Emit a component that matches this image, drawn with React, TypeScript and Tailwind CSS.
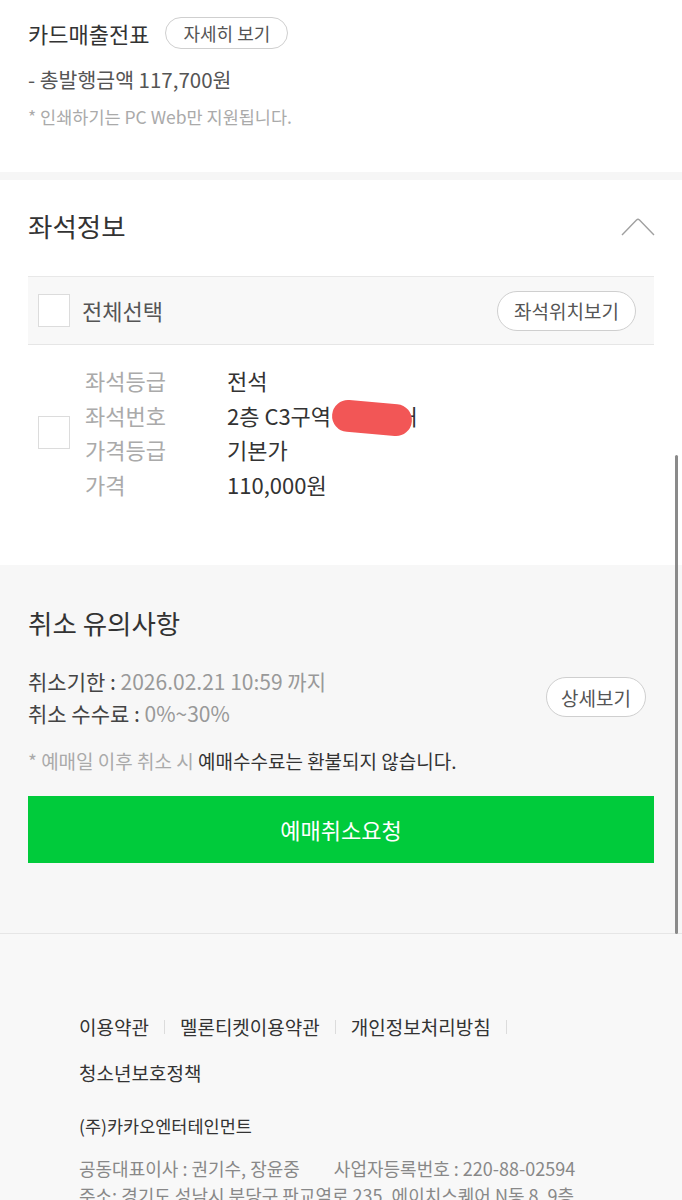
import React from "react";

const font = "font-['Noto_Sans_CJK_KR','Noto_Sans',sans-serif]";

const seatRows = [
  { label: "좌석등급", value: "전석" },
  { label: "좌석번호", value: "2층 C3구역", hidden: true },
  { label: "가격등급", value: "기본가" },
  { label: "가격", value: "110,000원" },
];

const links = ["이용약관", "멜론티켓이용약관", "개인정보처리방침", "청소년보호정책"];

const Pill = ({ children, className = "" }: { children: React.ReactNode; className?: string }) => (
  <button
    className={`rounded-full border border-[#cfcfcf] bg-white text-[#555] ${className}`}
  >
    {children}
  </button>
);

const Checkbox = () => (
  <span className="block w-[32px] h-[33px] border border-[#dcdcdc] bg-white shrink-0" />
);

export default function App() {
  return (
    <div className={`relative w-[682px] min-h-[1200px] bg-[#f8f8f8] ${font} text-[#333]`}>
      {/* 카드매출전표 */}
      <section className="bg-white px-[28px] pt-[17px] pb-[43px]">
        <div className="flex items-center gap-[16px]">
          <h3 className="text-[22px] leading-[32px] text-[#333]">카드매출전표</h3>
          <Pill className="h-[32px] px-[17px] text-[18px] leading-none">자세히 보기</Pill>
        </div>
        <p className="mt-[16px] text-[20.5px] leading-[28px] text-[#555]">- 총발행금액 117,700원</p>
        <p className="mt-[12px] text-[17.5px] leading-[24px] text-[#aaa]">* 인쇄하기는 PC Web만 지원됩니다.</p>
      </section>
      <div className="h-[8px] bg-[#f6f6f6]" />

      {/* 좌석정보 */}
      <section className="bg-white px-[28px] pt-[30px] pb-[64px]">
        <div className="flex items-center justify-between">
          <h2 className="text-[26.5px] leading-[32px] text-[#333]">좌석정보</h2>
          <svg width="34" height="20" viewBox="0 0 34 20" className="mr-[-1px] mt-[2px]">
            <path d="M1 18 L15.5 3 Q17 1.6 18.5 3 L33 18" fill="none" stroke="#a0a0a0" strokeWidth="1.4" />
          </svg>
        </div>
        <div className="mt-[34px] border-t border-[#e8e8e8]">
          <div className="flex items-center justify-between h-[68px] bg-[#f8f8f8] border-b border-[#e6e6e6] pl-[10px] pr-[18px]">
            <label className="flex items-center gap-[12px]">
              <Checkbox />
              <span className="text-[22px] text-[#555]">전체선택</span>
            </label>
            <Pill className="h-[40px] px-[16px] text-[19px] leading-none">좌석위치보기</Pill>
          </div>
          <div className="flex items-center pl-[10px] pt-[18px]">
            <Checkbox />
            <dl className="ml-[15px]">
              {seatRows.map((r) => (
                <div key={r.label} className="flex h-[34.5px] text-[22px] leading-[34.5px]">
                  <dt className="w-[142px] text-[#aaa]">{r.label}</dt>
                  <dd className="flex items-center text-[#333]">
                    {r.value}
                    {r.hidden && (
                      <>
                        <span className="ml-[1px] -my-[4px] translate-y-[3px] inline-block w-[80px] h-[32px] rounded-[16px] bg-[#f25656] rotate-[5deg]" />
                        <span className="-ml-[10px] text-[#333]">ㅓ</span>
                      </>
                    )}
                  </dd>
                </div>
              ))}
            </dl>
          </div>
        </div>
      </section>

      {/* 취소 유의사항 */}
      <section className="bg-[#f7f7f7] px-[28px] pt-[42px] pb-[70px] border-b border-[#e6e6e6]">
        <h2 className="text-[26.5px] leading-[32px] text-[#333]">취소 유의사항</h2>
        <div className="mt-[26px] flex items-center justify-between">
          <div className="text-[21px] leading-[32px] text-[#444]">
            <p>
              취소기한 : <span className="text-[#999]">2026.02.21 10:59 까지</span>
            </p>
            <p>
              취소 수수료 : <span className="text-[#999]">0%~30%</span>
            </p>
          </div>
          <Pill className="h-[40px] px-[14px] mr-[8px] text-[19px] leading-none">상세보기</Pill>
        </div>
        <p className="mt-[20px] text-[19px] leading-[24px] text-[#aaa]">
          * 예매일 이후 취소 시 <span className="text-[#333]">예매수수료는 환불되지 않습니다.</span>
        </p>
        <button className="mt-[23px] w-full h-[67px] bg-[#00cb3b] text-white text-[22px]">
          예매취소요청
        </button>
      </section>

      {/* footer */}
      <footer className="bg-[#f8f8f8] px-[79px] pt-[70px]">
        <ul className="flex flex-wrap items-center w-[500px]">
          {links.map((l, i) => (
            <li key={l} className="flex items-center text-[19px] leading-[46px] text-[#333]">
              {l}
              {i < links.length - 1 && <span className="mx-[15px] w-px h-[14px] bg-[#dcdcdc]" />}
            </li>
          ))}
        </ul>
        <p className="mt-[17px] text-[17.5px] leading-[26px] text-[#333]">(주)카카오엔터테인먼트</p>
        <p className="mt-[16px] text-[18px] leading-[26px] text-[#888] whitespace-nowrap">
          공동대표이사 : 권기수, 장윤중<span className="inline-block w-[34px]" />사업자등록번호 : 220-88-02594
        </p>
        <p className="text-[18px] leading-[28px] text-[#888] whitespace-nowrap">
          주소: 경기도 성남시 분당구 판교역로 235, 에이치스퀘어 N동 8, 9층
        </p>
      </footer>

      {/* scroll indicator */}
      <div className="absolute right-[4px] top-[455px] w-[3px] h-[479px] rounded-full bg-[#8a8a8a]" />
    </div>
  );
}
